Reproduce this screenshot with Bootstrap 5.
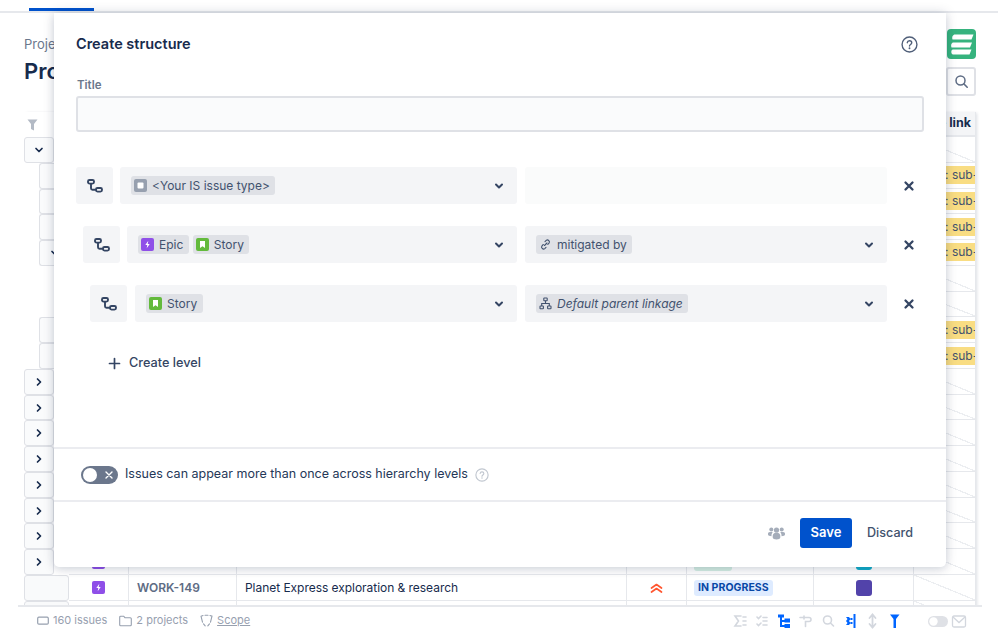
<!DOCTYPE html>
<html lang="en">
<head>
<meta charset="utf-8">
<title>Create structure</title>
<link href="https://cdn.jsdelivr.net/npm/bootstrap@5.3.0/dist/css/bootstrap.min.css" rel="stylesheet">
<style>
html,body{height:633px;overflow:hidden}
body{font-family:Inter,"Liberation Sans",sans-serif;color:#172b4d;background:#fff;position:relative;font-size:13px}
.app-top{height:13px;border-bottom:2px solid #e6e8ec;flex:none}
.app-tab{width:65px;height:3px;background:#0052cc;margin-left:29px;margin-top:8px}
.app-main{flex:1 1 auto;overflow:hidden;padding:0 22px 0 24px;min-height:0}
.crumb{margin-top:23px;height:16px;line-height:16px;color:#6b778c;font-size:13px;white-space:nowrap}
.page-h{margin-top:5px;height:28px;line-height:28px;font-size:22px;font-weight:600;color:#172b4d;white-space:nowrap;position:relative}
.logo-box{width:29px;height:30px;background:#36b37e;border-radius:4px;position:absolute;left:923px;top:-28px}
.logo-box svg{display:block}
.search-box{width:30px;height:29px;background:#fff;border:2px solid #dfe1e6;border-radius:3px;position:absolute;left:922px;top:10px;display:flex;align-items:center;justify-content:center}
.tools{height:27px}
.grid-wrap{box-shadow:2px 0 3px -1px rgba(9,30,66,.14)}
.grow{display:grid;grid-template-columns:45px 60px 108px 390px 60px 127px 100px 62px;height:25.77px}
.grow>div{border-bottom:1px solid #e6e8ec;border-right:1px solid #e6e8ec;min-width:0;overflow:hidden;display:flex;align-items:center;white-space:nowrap}
.grow.head{height:25px}
.grow.head>div{background:#f4f5f7;border-bottom:2px solid #e6e8ec;font-weight:700;font-size:12.5px;justify-content:flex-end;padding-right:4px}
.grow.head>div.lead-h{background:#fff;border:0;justify-content:flex-start;padding-left:3px}
.grow>div.lead-c{border:0;display:block;overflow:visible}
.lead-in{height:100%;background:#fafbfc;border:1px solid #dfe1e6;border-radius:3px;display:flex;align-items:center;justify-content:center;width:30px}
.lead-in.ind{margin-left:15px;border-right:0}
.lead-in.blank{background:#f9fafb;width:45px}
.hatch{background:linear-gradient(to top right,transparent calc(50% - .6px),#eceef1 calc(50% - .6px),#eceef1 calc(50% + .6px),transparent calc(50% + .6px))}
.yel{background:#f9dd83;height:18px;line-height:18px;color:#42526e;font-size:12px;padding-left:3px;width:100%}
.grow>div.ctr{justify-content:center;padding-top:1px}
.grow>div.c-key{padding:1px 0 0 8px;font-weight:600;color:#5e6c84;font-size:12px}
.grow>div.c-sum{padding:1px 0 0 8px;font-size:12px;letter-spacing:-.04px;color:#172b4d}
.grow>div.c-st{padding:2px 0 0 7px}
.st-pill{background:#deebff;color:#0747a6;font-size:10.5px;font-weight:700;height:16px;line-height:16px;padding:0 4px;border-radius:3px;letter-spacing:.05px}
.st-green{background:#d5efe3;width:38px;height:16px;border-radius:3px}
.sq{width:16px;height:16px;border-radius:3px}
.sq-cyan{background:#12aecb}
.sq-purple{background:#5243aa}
.app-foot{flex:none;height:27px;position:relative;display:flex;align-items:center;padding:2px 0 0 37px;font-size:11px;color:#97a0af}
.app-foot::before{content:"";position:absolute;left:18px;right:16px;top:-1px;height:2px;background:#e6e8ec}
.foot-item{display:flex;align-items:center;gap:4px;margin-right:12px}
.foot-u{text-decoration:underline}
.foot-tools{margin-left:auto;display:flex;align-items:center;padding-right:28px}
.dlg{position:absolute;left:54px;top:13px;width:892px;height:554px;background:#fff;border-radius:0 0 5px 5px;box-shadow:0 0 12px rgba(9,30,66,.17),0 3px 8px rgba(9,30,66,.08);display:flex;flex-direction:column}
.dlg-body{flex:1 1 auto;padding:0 22px;min-height:0}
.dlg-head{height:62px;display:flex;align-items:flex-start;justify-content:space-between;padding-right:6px;padding-top:23px}
.dlg-title{font-size:14.5px;font-weight:600;color:#172b4d;margin:0;line-height:16px}
.t-label{font-size:11.5px;font-weight:600;color:#6b778c;height:21px;line-height:20px;padding-left:1px}
.t-input{height:36px;background:#fafbfc;border:2px solid #dfe1e6;border-radius:3px;width:848px;display:block;margin-bottom:35px}
.lv{display:flex;height:37px;margin-bottom:22px;align-items:stretch;padding-right:9px}
.lv.l2{padding-left:7px}.lv.l3{padding-left:14px}
.lv-btn{width:37px;background:#f4f5f7;border-radius:3px;display:flex;align-items:center;justify-content:center;flex:none;margin-right:7px}
.lv.l3 .lv-btn{margin-right:8px}
.lv-sel{background:#f4f5f7;border-radius:3px;display:flex;align-items:center;padding:0 11px;gap:4px;flex:1 1 0;min-width:0}
.lv-a{margin-right:8px}
.lv-b{flex:none;width:362px}
.lv-b.off{background:#fafbfb}
.lv-x{flex:none;width:28px;display:flex;align-items:center;justify-content:flex-end}
.chev{margin-left:auto;margin-right:1px;flex:none}
.tagp{display:inline-flex;align-items:center;height:19px;background:#dfe1e6;border-radius:3px;padding:0 5.5px 0 3px;color:#42526e;font-size:12px;gap:5px;white-space:nowrap}
.tagp.i{font-style:italic}
.add-lv{display:flex;align-items:center;margin-left:32px;margin-top:31px;gap:8px;font-size:12.7px;font-weight:500;color:#344563;height:20px}
.dlg-opt{flex:none;height:53px;border-top:2px solid #ebecf0;display:flex;align-items:center;padding-left:27px;gap:7px;font-size:12.5px;color:#253858}
.tog{width:37px;height:18px;border-radius:9px;background:#6b778c;position:relative;flex:none}
.tog-k{position:absolute;left:2px;top:2px;width:14px;height:14px;border-radius:50%;background:#fff}
.tog-x{position:absolute;right:5px;top:5px}
.ic-help-o{color:#505f79}
.ic-help-m{color:#c1c7d0}
.dlg-foot{flex:none;height:67px;border-top:2px solid #ebecf0;display:flex;align-items:center;justify-content:flex-end;padding-right:33px;padding-bottom:3px}
.btn-save{background:#0052cc;border:0;color:#fff;font-size:13px;font-weight:600;width:52px;height:30px;border-radius:3px;padding:0;margin-left:15px}
.btn-disc{background:none;border:0;color:#42526e;font-size:12.6px;font-weight:500;padding:0;margin-left:15px}
</style>
</head>
<body class="d-flex flex-column">
<svg width="0" height="0" class="position-absolute">
<defs>
<symbol id="i-chev-d" viewBox="0 0 12 12"><path d="M3 4.500 6 7.500 9 4.500" fill="none" stroke="#172b4d" stroke-width="1.700" stroke-linecap="round" stroke-linejoin="round"/></symbol>
<symbol id="i-chev-r" viewBox="0 0 12 12"><path d="M4.500 3 7.500 6 4.500 9" fill="none" stroke="#172b4d" stroke-width="1.700" stroke-linecap="round" stroke-linejoin="round"/></symbol>
<symbol id="i-sel" viewBox="0 0 12 12"><path d="M3 4.500 6 7.500 9 4.500" fill="none" stroke="#344563" stroke-width="2" stroke-linecap="round" stroke-linejoin="round"/></symbol>
<symbol id="i-tree" viewBox="0 0 16 16"><g fill="none" stroke="#344563" stroke-width="1.900"><rect x="1" y="2" width="6" height="3.600" rx="1.500"/><rect x="9" y="10" width="6" height="3.600" rx="1.500"/><path d="M4 5.600V10.300a1.500 1.500 0 0 0 1.500 1.500H9"/></g></symbol>
<symbol id="i-x" viewBox="0 0 12 12"><path d="M2.500 2.500 9.500 9.500M9.500 2.500 2.500 9.500" stroke="#344563" stroke-width="2.300" stroke-linecap="round"/></symbol>
<symbol id="i-epic" viewBox="0 0 13 13"><rect width="13" height="13" rx="2" fill="#8f4fe8"/><path d="M7.300 2.800 4.300 7h2l-.6 3.200 3-4.300H6.700z" fill="#fff"/></symbol>
<symbol id="i-story" viewBox="0 0 13 13"><rect width="13" height="13" rx="2" fill="#63ba3c"/><path d="M4 3h5v7L6.500 8.200 4 10z" fill="#fff"/></symbol>
<symbol id="i-task" viewBox="0 0 13 13"><rect width="13" height="13" rx="2" fill="#97a0af"/><rect x="3.500" y="3.500" width="6" height="6" rx="1" fill="#fff"/></symbol>
<symbol id="i-help" viewBox="0 0 16 16"><circle cx="8" cy="8" r="7" fill="none" stroke="currentColor" stroke-width="1.300"/><path d="M5.900 6.300A2.100 2.100 0 0 1 8 4.500c1.200 0 2.100.8 2.100 1.900 0 1.700-2.100 1.500-2.100 3.100" fill="none" stroke="currentColor" stroke-width="1.300" stroke-linecap="round"/><circle cx="8" cy="11.500" r=".9" fill="currentColor"/></symbol>
</defs>
</svg>

<header class="app-top"><div class="app-tab"></div></header>

<main class="app-main">
  <div class="crumb">Projects</div>
  <div class="page-h">Projects
    <div class="logo-box"><svg width="29" height="30" viewBox="0 0 29 30"><g fill="#fff"><path d="M8 5.500H26.500L24.500 10.500H5.500C4.500 8 6 5.500 8 5.500z"/><path d="M6.500 13.500H25L23 18.500H4.500C3.500 16 4.500 13.500 6.500 13.500z"/><path d="M6 20.500H24.500L22.500 25.500H6C4 25.500 3.500 20.500 6 20.500z"/></g></svg></div>
    <div class="search-box"><svg width="15" height="15" viewBox="0 0 15 15"><circle cx="6.500" cy="6.500" r="4.500" fill="none" stroke="#5e6c84" stroke-width="1.500"/><path d="M10 10l3.200 3.200" stroke="#5e6c84" stroke-width="1.600" stroke-linecap="round"/></svg></div>
  </div>
  <div class="tools"></div>
  <div class="grid-wrap">
    <div class="grow head"><div class="lead-h"><svg width="11" height="12" viewBox="0 0 11 12"><path d="M.5.500h10L7 5v6.500L4 10V5z" fill="#b3bac5"/></svg></div><div></div><div></div><div></div><div></div><div></div><div></div><div>Create link</div></div>

    <div class="grow"><div class="lead-c"><div class="lead-in"><svg width="12" height="12"><use href="#i-chev-d"/></svg></div></div><div></div><div></div><div></div><div></div><div></div><div></div><div class="hatch"></div></div>
    <div class="grow"><div class="lead-c"><div class="lead-in ind"></div></div><div></div><div></div><div></div><div></div><div></div><div></div><div><div class="yel">Type: sub-task</div></div></div>
    <div class="grow"><div class="lead-c"><div class="lead-in ind"></div></div><div></div><div></div><div></div><div></div><div></div><div></div><div><div class="yel">Type: sub-task</div></div></div>
    <div class="grow"><div class="lead-c"><div class="lead-in ind"></div></div><div></div><div></div><div></div><div></div><div></div><div></div><div><div class="yel">Type: sub-task</div></div></div>
    <div class="grow"><div class="lead-c"><div class="lead-in ind"><svg width="12" height="12"><use href="#i-chev-d"/></svg></div></div><div></div><div></div><div></div><div></div><div></div><div></div><div><div class="yel">Type: sub-task</div></div></div>
    <div class="grow"><div class="lead-c"></div><div></div><div></div><div></div><div></div><div></div><div></div><div class="hatch"></div></div>
    <div class="grow"><div class="lead-c"></div><div></div><div></div><div></div><div></div><div></div><div></div><div class="hatch"></div></div>
    <div class="grow"><div class="lead-c"><div class="lead-in ind"></div></div><div></div><div></div><div></div><div></div><div></div><div></div><div><div class="yel">Type: sub-task</div></div></div>
    <div class="grow"><div class="lead-c"><div class="lead-in ind"></div></div><div></div><div></div><div></div><div></div><div></div><div></div><div><div class="yel">Type: sub-task</div></div></div>
    <div class="grow"><div class="lead-c"><div class="lead-in"><svg width="12" height="12"><use href="#i-chev-r"/></svg></div></div><div></div><div></div><div></div><div></div><div></div><div></div><div class="hatch"></div></div>
    <div class="grow"><div class="lead-c"><div class="lead-in"><svg width="12" height="12"><use href="#i-chev-r"/></svg></div></div><div></div><div></div><div></div><div></div><div></div><div></div><div class="hatch"></div></div>
    <div class="grow"><div class="lead-c"><div class="lead-in"><svg width="12" height="12"><use href="#i-chev-r"/></svg></div></div><div></div><div></div><div></div><div></div><div></div><div></div><div class="hatch"></div></div>
    <div class="grow"><div class="lead-c"><div class="lead-in"><svg width="12" height="12"><use href="#i-chev-r"/></svg></div></div><div></div><div></div><div></div><div></div><div></div><div></div><div class="hatch"></div></div>
    <div class="grow"><div class="lead-c"><div class="lead-in"><svg width="12" height="12"><use href="#i-chev-r"/></svg></div></div><div></div><div></div><div></div><div></div><div></div><div></div><div class="hatch"></div></div>
    <div class="grow"><div class="lead-c"><div class="lead-in"><svg width="12" height="12"><use href="#i-chev-r"/></svg></div></div><div></div><div></div><div></div><div></div><div></div><div></div><div class="hatch"></div></div>
    <div class="grow"><div class="lead-c"><div class="lead-in"><svg width="12" height="12"><use href="#i-chev-r"/></svg></div></div><div></div><div></div><div></div><div></div><div></div><div></div><div class="hatch"></div></div>
    <div class="grow"><div class="lead-c"><div class="lead-in"><svg width="12" height="12"><use href="#i-chev-r"/></svg></div></div><div class="ctr"><svg width="13" height="13"><use href="#i-epic"/></svg></div><div></div><div></div><div></div><div class="c-st"><div class="st-green"></div></div><div class="ctr"><div class="sq sq-cyan"></div></div><div class="hatch"></div></div>
    <div class="grow"><div class="lead-c"><div class="lead-in blank"></div></div><div class="ctr"><svg width="13" height="13"><use href="#i-epic"/></svg></div><div class="c-key">WORK-149</div><div class="c-sum">Planet Express exploration &amp; research</div><div class="ctr"><svg width="13" height="12" viewBox="0 0 13 12"><path d="M1.500 6 6.500 2.500 11.500 6M1.500 10 6.500 6.500 11.500 10" fill="none" stroke="#ff5630" stroke-width="1.700" stroke-linecap="round" stroke-linejoin="round"/></svg></div><div class="c-st"><span class="st-pill">IN PROGRESS</span></div><div class="ctr"><div class="sq sq-purple"></div></div><div class="hatch"></div></div>
    <div class="grow"><div class="lead-c"><div class="lead-in blank"></div></div><div></div><div></div><div></div><div></div><div></div><div></div><div class="hatch"></div></div>
  </div>
</main>

<footer class="app-foot">
  <span class="foot-item"><svg width="12" height="10" viewBox="0 0 12 10"><rect x=".7" y="1.200" width="10.600" height="7" rx="1.200" fill="none" stroke="#97a0af" stroke-width="1.200"/></svg>160 issues</span>
  <span class="foot-item"><svg width="13" height="12" viewBox="0 0 13 12"><path d="M.7 2.200a1 1 0 0 1 1-1h3l1.200 1.500h5.400a1 1 0 0 1 1 1v6a1 1 0 0 1-1 1H1.700a1 1 0 0 1-1-1z" fill="none" stroke="#97a0af" stroke-width="1.100"/></svg>2 projects</span>
  <span class="foot-item"><svg width="13" height="13" viewBox="0 0 13 13"><path d="M1 2.200 3 1.500M5 1.200h3M10 1.500l2 .7-1.500 6M9.500 9.800 7.800 11.800M5.200 11.800 3.500 9.800M2.500 8.200 1 2.200" fill="none" stroke="#97a0af" stroke-width="1.100" stroke-linecap="round"/></svg><span class="foot-u">Scope</span></span>
  <div class="foot-tools">
    <svg width="240" height="16" viewBox="0 0 240 16">
      <g fill="none" stroke="#d3d7de" stroke-width="1.600" stroke-linecap="round">
        <path d="M11 3H5L8.500 8 5 13H11M13 4h3M13 8h3M13 12h3"/>
        <path d="M27 4l1.500 1.500L31 3M27 11l1.500 1.500L31 10M33 4.500h4M33 8h4M33 12h4"/>
        <path d="M70 4.500h9a2 2 0 0 1 0 4h-3.500v5M74 3v3"/>
        <circle cx="97.500" cy="7" r="4"/><path d="M100.500 10l3 3"/>
        <path d="M142.500 1.500v13M139.500 5l3-3.500 3 3.500M139.500 11l3 3.500 3-3.500" stroke-width="1.800"/>
      </g>
      <g fill="#0065ff">
        <path d="M48 1.500h6v3h-2v2.500h2.500V5.500H60v4h-5.500V9H52v3h2.500v-1H60v4h-5.500v-1H50V4.500h-2z"/>
        <rect x="123.500" y="1" width="2" height="14"/>
        <path d="M116 4h3l1.500 2-1.500 2 1.500 2-1.500 2h-3l1.500-2-1.500-2 1.500-2zM120.500 5h2v2h-2zM120.500 9h2v2h-2z"/>
        <path d="M160 1.500h9.500l-3.500 4.500v9h-2.500V6z"/>
      </g>
      <rect x="198" y="3" width="20" height="11" rx="5.500" fill="#dfe1e6"/><circle cx="203.500" cy="8.500" r="4.200" fill="#fff"/>
      <rect x="222.500" y="3" width="13" height="11" rx="1.500" fill="none" stroke="#d3d7de" stroke-width="1.300"/><path d="M223 4l6 5.500L235 4" fill="none" stroke="#d3d7de" stroke-width="1.300"/>
    </svg>
  </div>
</footer>

<section class="dlg" role="dialog" aria-label="Create structure">
  <div class="dlg-body">
    <div class="dlg-head">
      <h5 class="dlg-title">Create structure</h5>
      <svg width="17" height="17" class="ic-help-o"><use href="#i-help"/></svg>
    </div>
    <div class="t-label">Title</div>
    <input class="t-input" type="text" aria-label="Title">

    <div class="lv">
      <div class="lv-btn"><svg width="16" height="16"><use href="#i-tree"/></svg></div>
      <div class="lv-sel lv-a"><span class="tagp"><svg width="13" height="13"><use href="#i-task"/></svg>&lt;Your IS issue type&gt;</span><svg class="chev" width="12" height="12"><use href="#i-sel"/></svg></div>
      <div class="lv-sel lv-b off"></div>
      <div class="lv-x"><svg width="12" height="12"><use href="#i-x"/></svg></div>
    </div>
    <div class="lv l2">
      <div class="lv-btn"><svg width="16" height="16"><use href="#i-tree"/></svg></div>
      <div class="lv-sel lv-a"><span class="tagp"><svg width="13" height="13"><use href="#i-epic"/></svg>Epic</span><span class="tagp"><svg width="13" height="13"><use href="#i-story"/></svg>Story</span><svg class="chev" width="12" height="12"><use href="#i-sel"/></svg></div>
      <div class="lv-sel lv-b"><span class="tagp"><svg width="13" height="13" viewBox="0 0 13 13"><path d="M5.500 7.500 8 5M4.300 6.500 3 7.800a2 2 0 0 0 2.800 2.800L7 9.400M6 3.600l1.200-1.200A2 2 0 0 1 10 5.200L8.800 6.500" fill="none" stroke="#42526e" stroke-width="1.100" stroke-linecap="round"/></svg>mitigated by</span><svg class="chev" width="12" height="12"><use href="#i-sel"/></svg></div>
      <div class="lv-x"><svg width="12" height="12"><use href="#i-x"/></svg></div>
    </div>
    <div class="lv l3">
      <div class="lv-btn"><svg width="16" height="16"><use href="#i-tree"/></svg></div>
      <div class="lv-sel lv-a"><span class="tagp"><svg width="13" height="13"><use href="#i-story"/></svg>Story</span><svg class="chev" width="12" height="12"><use href="#i-sel"/></svg></div>
      <div class="lv-sel lv-b"><span class="tagp i"><svg width="13" height="13" viewBox="0 0 13 13"><g fill="none" stroke="#42526e" stroke-width="1.100"><rect x="4.800" y="1" width="3.400" height="2.800" rx=".6"/><rect x="1" y="9" width="3.400" height="2.800" rx=".6"/><rect x="8.600" y="9" width="3.400" height="2.800" rx=".6"/><path d="M6.500 3.800v2.700M2.700 9V6.500h7.600V9"/></g></svg>Default parent linkage</span><svg class="chev" width="12" height="12"><use href="#i-sel"/></svg></div>
      <div class="lv-x"><svg width="12" height="12"><use href="#i-x"/></svg></div>
    </div>
    <div class="add-lv"><svg width="13" height="13" viewBox="0 0 13 13"><path d="M6.500 1.500v10M1.500 6.500h10" stroke="#344563" stroke-width="1.700" stroke-linecap="round"/></svg>Create level</div>
  </div>
  <div class="dlg-opt">
    <span class="tog"><span class="tog-k"></span><svg class="tog-x" width="8" height="8" viewBox="0 0 8 8"><path d="M1 1l6 6M7 1 1 7" stroke="#fff" stroke-width="1.400" stroke-linecap="round"/></svg></span>
    <span>Issues can appear more than once across hierarchy levels</span>
    <svg width="14" height="14" class="ic-help-m"><use href="#i-help"/></svg>
  </div>
  <div class="dlg-foot">
    <svg width="17" height="14" viewBox="0 0 17 14"><g fill="#a5adba"><circle cx="8.500" cy="4" r="2.600"/><circle cx="3.300" cy="3.500" r="2"/><circle cx="13.700" cy="3.500" r="2"/><path d="M4.700 10c0-2.200 1.700-3.400 3.800-3.400s3.800 1.200 3.800 3.400v1.500c0 1.100-1.800 2-3.800 2s-3.800-.9-3.800-2z"/><path d="M0 7.500C0 6.300 1.500 6 3.300 6c.6 0 1 .1 1.400.2C3.900 7 3.500 8 3.500 9.600v.6C1.600 10 0 9.500 0 8.500zM17 7.500C17 6.300 15.500 6 13.700 6c-.6 0-1 .1-1.400.2.800.8 1.200 1.800 1.200 3.400v.6c1.900-.2 3.500-.7 3.500-1.700z"/></g></svg>
    <button class="btn btn-save" type="button">Save</button>
    <button class="btn btn-disc" type="button">Discard</button>
  </div>
</section>
<script src="https://cdn.jsdelivr.net/npm/bootstrap@5.3.0/dist/js/bootstrap.bundle.min.js"></script>
</body>
</html>
